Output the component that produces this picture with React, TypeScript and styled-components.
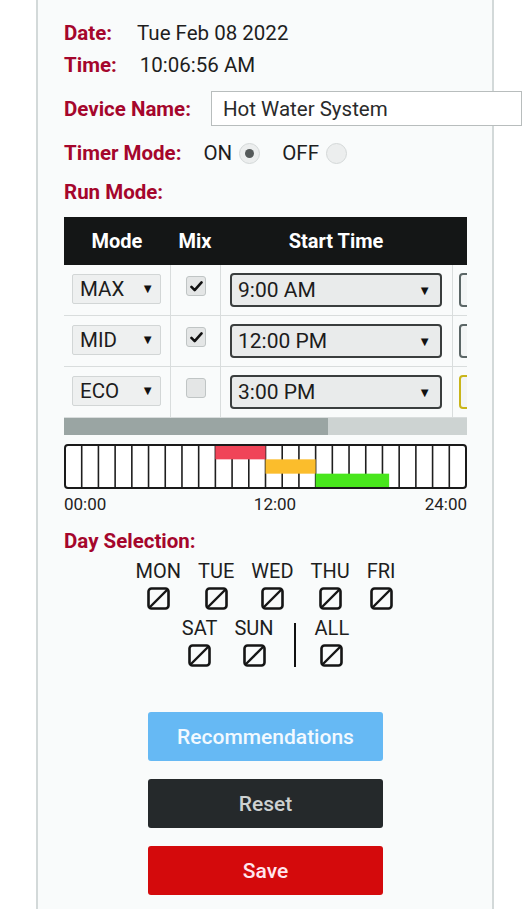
import React from 'react';
import styled, { createGlobalStyle } from 'styled-components';

const GlobalStyle = createGlobalStyle`
  html, body {
    margin: 0;
    padding: 0;
    background: #ffffff;
  }
  body {
    font-family: Roboto, "Noto Sans", Arial, sans-serif;
    color: #222;
  }
`;

const RED_LABEL = '#a5062c';

const Panel = styled.div`
  margin-left: 36px;
  width: 458px;
  min-height: 909px;
  box-sizing: border-box;
  border-left: 2px solid #d3d9d9;
  border-right: 2px solid #d3d9d9;
  background: #f9fbfb;
  padding: 17px 0 0 26px;
`;

const Field = styled.div<{ $gap: number; $top?: number; $height?: number }>`
  display: flex;
  align-items: center;
  gap: ${({ $gap }) => $gap}px;
  height: ${({ $height }) => $height ?? 32}px;
  margin-top: ${({ $top }) => $top ?? 0}px;
`;

const Label = styled.span`
  font-size: 20.5px;
  font-weight: 700;
  color: ${RED_LABEL};
  white-space: nowrap;
`;

const Value = styled.span`
  font-size: 20.5px;
  color: #1e1e1e;
  white-space: nowrap;
`;

const NameInput = styled.div`
  width: 311px;
  height: 35px;
  box-sizing: border-box;
  border: 1px solid #b8bdbd;
  background: #ffffff;
  display: flex;
  align-items: center;
  padding-left: 11px;
  font-size: 20.5px;
  color: #2a2a2a;
  flex-shrink: 0;
`;

const RadioGroup = styled.div`
  display: flex;
  align-items: center;
`;

const RadioText = styled.span`
  font-size: 20.5px;
  color: #1e1e1e;
  margin-right: 7px;
`;

const Radio = styled.span<{ $checked?: boolean; $after?: number }>`
  width: 21px;
  height: 21px;
  border-radius: 50%;
  box-sizing: border-box;
  border: 1px solid #d4d8d8;
  background: #eceeee;
  display: flex;
  align-items: center;
  justify-content: center;
  margin-right: ${({ $after }) => $after ?? 0}px;

  &::after {
    content: '';
    display: ${({ $checked }) => ($checked ? 'block' : 'none')};
    width: 9px;
    height: 9px;
    border-radius: 50%;
    background: #555a5a;
  }
`;

const TableViewport = styled.div`
  width: 403px;
  overflow: hidden;
  margin-top: 9px;
`;

const TableGrid = styled.div`
  width: 520px;
`;

const HeadRow = styled.div`
  display: grid;
  grid-template-columns: 106px 50px 232px 132px;
  height: 48px;
  background: #141616;
`;

const HeadCell = styled.div`
  display: flex;
  align-items: center;
  justify-content: center;
  font-size: 20px;
  font-weight: 700;
  color: #ffffff;
`;

const BodyRow = styled.div`
  display: grid;
  grid-template-columns: 106px 50px 232px 132px;
  height: 51px;
  border-bottom: 1px solid #d9dddd;
  box-sizing: border-box;
`;

const BodyCell = styled.div<{ $divider?: boolean; $pad: number }>`
  display: flex;
  align-items: center;
  padding-left: ${({ $pad }) => $pad}px;
  border-left: ${({ $divider }) => ($divider ? '1px solid #d9dddd' : 'none')};
`;

const ModeSelect = styled.div`
  width: 89px;
  height: 30px;
  box-sizing: border-box;
  border: 1px solid #d2d6d6;
  border-radius: 2px;
  background: #eef0f0;
  display: flex;
  align-items: center;
  justify-content: space-between;
  padding: 0 6px 0 7px;
  font-size: 20.5px;
  color: #1c1c1c;
  margin-top: -3px;
`;

const Arrow = styled.span`
  font-size: 13px;
  color: #111;
`;

const MixBox = styled.div`
  width: 20px;
  height: 20px;
  box-sizing: border-box;
  border: 1px solid #c0c5c5;
  border-radius: 3px;
  background: #e4e6e6;
  display: flex;
  align-items: center;
  justify-content: center;
  margin-top: -8px;
`;

const TimeSelect = styled.div`
  width: 212px;
  height: 34px;
  box-sizing: border-box;
  border: 2px solid #3a3e3e;
  border-radius: 4px;
  background: #e9ebeb;
  display: flex;
  align-items: center;
  justify-content: space-between;
  padding: 0 9px 0 6px;
  font-size: 21px;
  color: #1c1c1c;
`;

const EndSelect = styled.div<{ $accent?: boolean }>`
  width: 80px;
  height: 34px;
  box-sizing: border-box;
  border: 2px solid ${({ $accent }) => ($accent ? '#c9b51a' : '#5b6666')};
  border-radius: 4px;
  background: #f3f5f5;
`;

const ScrollTrack = styled.div`
  height: 17px;
  background: #cdd3d2;
`;

const ScrollThumb = styled.div`
  height: 100%;
  background: #9aa5a3;
`;

const Timeline = styled.div`
  width: 403px;
  margin-top: 9px;
`;

const TimeLabels = styled.div`
  display: flex;
  justify-content: space-between;
  font-size: 17px;
  color: #222;
  margin-top: 5px;
`;

const MidLabel = styled.span`
  margin-left: 19px;
`;

const SectionTitle = styled(Label)`
  display: block;
  margin-top: 15px;
  line-height: 24px;
`;

const DaysBlock = styled.div`
  width: 403px;
  display: flex;
  flex-direction: column;
  align-items: center;
  margin-top: 7px;
  gap: 7px;
`;

const DayRow = styled.div`
  display: flex;
  align-items: center;
  gap: 17px;
`;

const Day = styled.div`
  display: flex;
  flex-direction: column;
  align-items: center;
  gap: 5px;
`;

const DayName = styled.span`
  font-size: 20px;
  color: #1e1e1e;
  line-height: 22px;
`;

const Separator = styled.div`
  width: 2px;
  height: 44px;
  background: #111;
  margin: 0 2px 0 3px;
  align-self: flex-end;
`;

const Buttons = styled.div`
  width: 403px;
  display: flex;
  flex-direction: column;
  align-items: center;
  gap: 18px;
  margin-top: 45px;
`;

const Button = styled.div<{ $bg: string; $fg: string }>`
  width: 235px;
  height: 49px;
  border-radius: 3px;
  background: ${({ $bg }) => $bg};
  color: ${({ $fg }) => $fg};
  display: flex;
  align-items: center;
  justify-content: center;
  font-size: 21px;
  font-weight: 500;
`;

const Check = () => (
  <svg width="13" height="11" viewBox="0 0 14 12">
    <path d="M1.5 6.5 L5 10 L12.5 1.5" fill="none" stroke="#111" strokeWidth="2.8" strokeLinecap="round" strokeLinejoin="round" />
  </svg>
);

const DayBox = () => (
  <svg width="23" height="23" viewBox="0 0 23 23">
    <rect x="1.5" y="1.5" width="20" height="20" rx="3" fill="none" stroke="#151515" strokeWidth="2.6" />
    <path d="M2.5 20.5 L20.5 2.5" stroke="#151515" strokeWidth="2.4" />
  </svg>
);

const TimelineChart = () => {
  const w = 403;
  const h = 45;
  const cell = (w - 2) / 24;
  const lines = Array.from({ length: 23 }, (_, i) => 1 + cell * (i + 1));
  const band = (h - 2) / 3;
  const bars = [
    { from: 9, to: 12, row: 0, color: '#f04458' },
    { from: 12, to: 15, row: 1, color: '#fbbd2c' },
    { from: 15, to: 19.4, row: 2, color: '#48e61c' },
  ];
  return (
    <svg width={w} height={h} viewBox={`0 0 ${w} ${h}`} style={{ display: 'block' }}>
      <rect x="1" y="1" width={w - 2} height={h - 2} rx="3" fill="#ffffff" />
      {lines.map((x) => (
        <line key={x} x1={x} y1="1" x2={x} y2={h - 1} stroke="#1e1e1e" strokeWidth="1.6" />
      ))}
      {bars.map((b) => (
        <rect
          key={b.row}
          x={1 + cell * b.from}
          y={1 + band * b.row}
          width={cell * (b.to - b.from)}
          height={band}
          fill={b.color}
        />
      ))}
      <rect x="1" y="1" width={w - 2} height={h - 2} rx="3" fill="none" stroke="#1a1a1a" strokeWidth="2" />
    </svg>
  );
};

const rows = [
  { mode: 'MAX', mix: true, start: '9:00 AM' },
  { mode: 'MID', mix: true, start: '12:00 PM' },
  { mode: 'ECO', mix: false, start: '3:00 PM' },
];

export default function App() {
  return (
    <>
      <GlobalStyle />
      <Panel>
        <Field $gap={25}>
          <Label>Date:</Label>
          <Value>Tue Feb 08 2022</Value>
        </Field>
        <Field $gap={23}>
          <Label>Time:</Label>
          <Value>10:06:56 AM</Value>
        </Field>
        <Field $gap={20} $top={10} $height={35}>
          <Label>Device Name:</Label>
          <NameInput>Hot Water System</NameInput>
        </Field>
        <Field $gap={22} $top={11}>
          <Label>Timer Mode:</Label>
          <RadioGroup>
            <RadioText>ON</RadioText>
            <Radio $checked $after={22} />
            <RadioText>OFF</RadioText>
            <Radio />
          </RadioGroup>
        </Field>
        <Field $gap={0} $top={7}>
          <Label>Run Mode:</Label>
        </Field>

        <TableViewport>
          <TableGrid>
            <HeadRow>
              <HeadCell>Mode</HeadCell>
              <HeadCell>Mix</HeadCell>
              <HeadCell>Start Time</HeadCell>
              <HeadCell />
            </HeadRow>
            {rows.map((r, i) => (
              <BodyRow key={r.mode}>
                <BodyCell $pad={8}>
                  <ModeSelect>
                    {r.mode}
                    <Arrow>▼</Arrow>
                  </ModeSelect>
                </BodyCell>
                <BodyCell $pad={15} $divider>
                  <MixBox>{r.mix && <Check />}</MixBox>
                </BodyCell>
                <BodyCell $pad={9} $divider>
                  <TimeSelect>
                    {r.start}
                    <Arrow>▼</Arrow>
                  </TimeSelect>
                </BodyCell>
                <BodyCell $pad={6} $divider>
                  <EndSelect $accent={i === 2} />
                </BodyCell>
              </BodyRow>
            ))}
          </TableGrid>
          <ScrollTrack>
            <ScrollThumb style={{ width: `${(264 / 403) * 100}%` }} />
          </ScrollTrack>
        </TableViewport>

        <Timeline>
          <TimelineChart />
          <TimeLabels>
            <span>00:00</span>
            <MidLabel>12:00</MidLabel>
            <span>24:00</span>
          </TimeLabels>
        </Timeline>

        <SectionTitle>Day Selection:</SectionTitle>
        <DaysBlock>
          <DayRow>
            {['MON', 'TUE', 'WED', 'THU', 'FRI'].map((d) => (
              <Day key={d}>
                <DayName>{d}</DayName>
                <DayBox />
              </Day>
            ))}
          </DayRow>
          <DayRow>
            {['SAT', 'SUN'].map((d) => (
              <Day key={d}>
                <DayName>{d}</DayName>
                <DayBox />
              </Day>
            ))}
            <Separator />
            <Day>
              <DayName>ALL</DayName>
              <DayBox />
            </Day>
          </DayRow>
        </DaysBlock>

        <Buttons>
          <Button $bg="#66b9f4" $fg="#f2f9ff">Recommendations</Button>
          <Button $bg="#25292b" $fg="#cdd1d1">Reset</Button>
          <Button $bg="#d40a0c" $fg="#ffe6ee">Save</Button>
        </Buttons>
      </Panel>
    </>
  );
}
